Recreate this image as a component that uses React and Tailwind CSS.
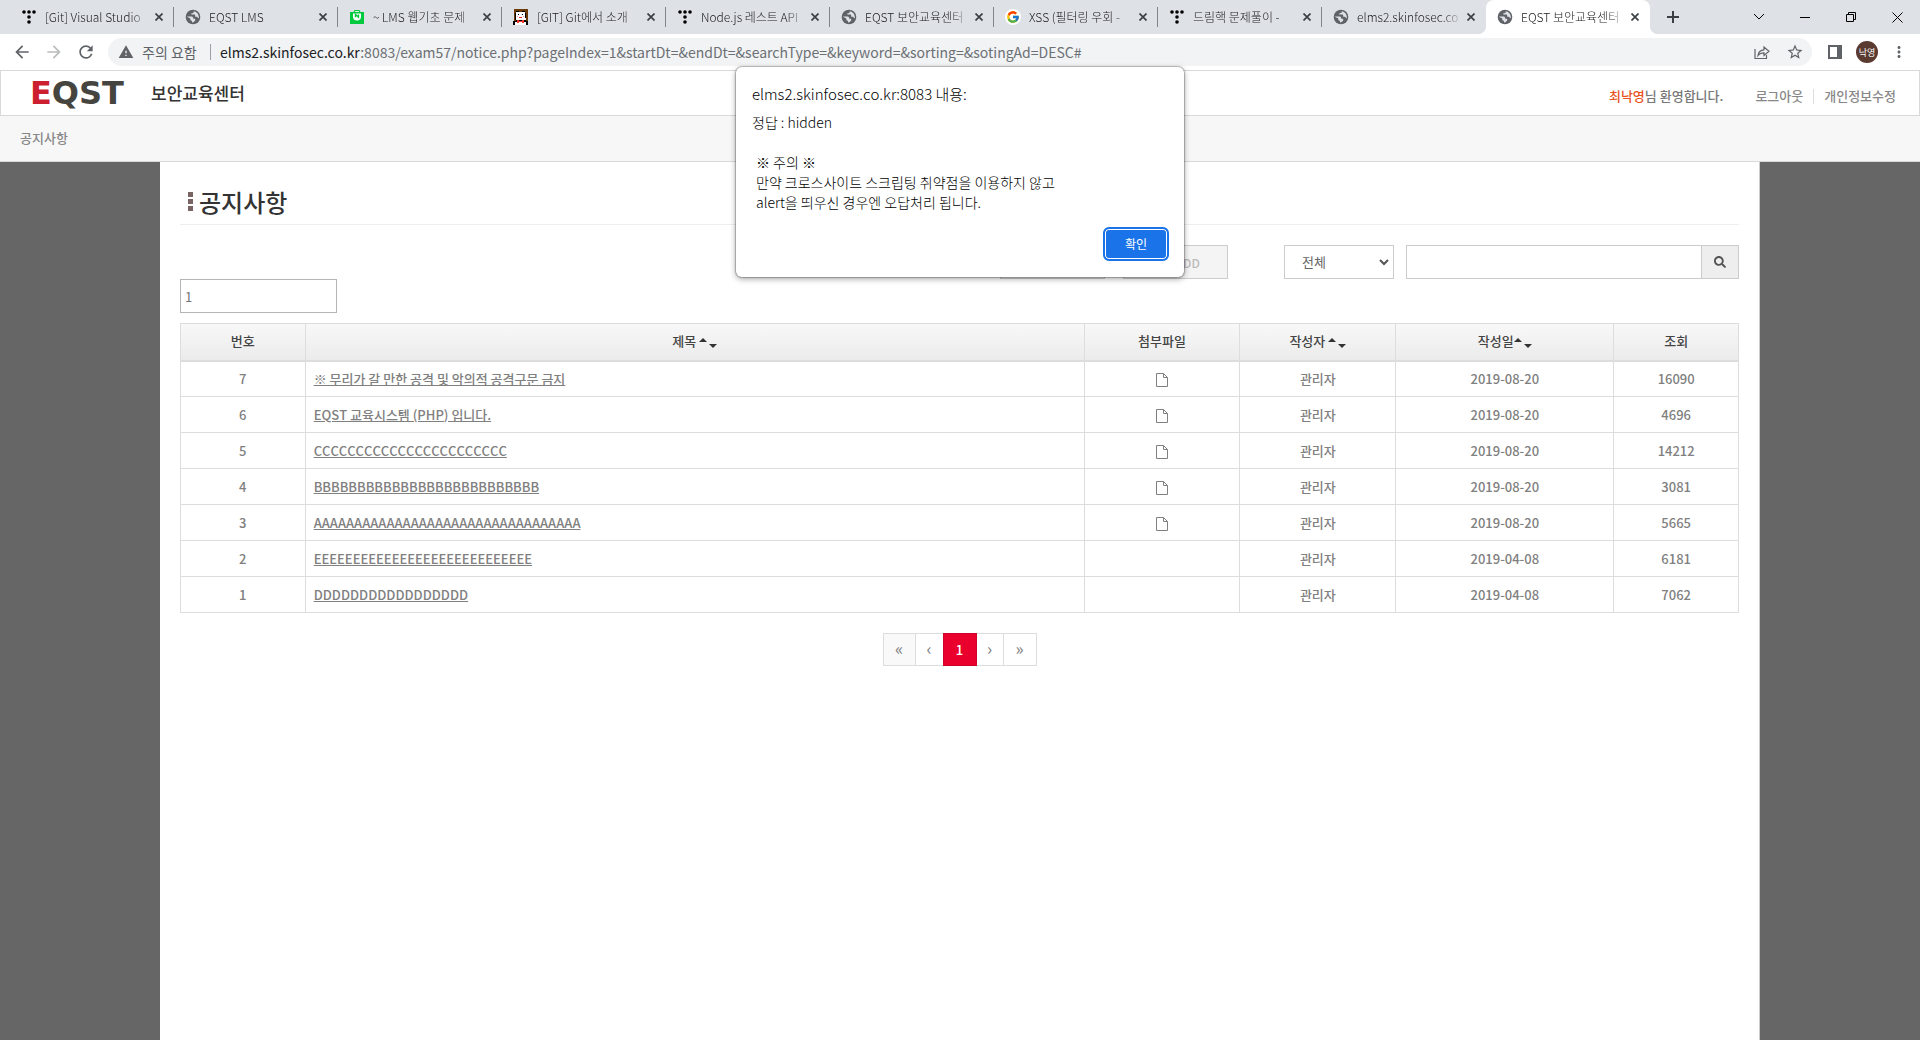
import React from "react";
import { MdWarning, MdStarBorder, MdRefresh, MdArrowBack, MdArrowForward, MdMoreVert } from "react-icons/md";
import { FcGoogle } from "react-icons/fc";
import { FaSearch } from "react-icons/fa";

function DotsIcon() {
  const dots = [[2, 3], [7, 3], [12, 3], [7, 8], [7, 13]];
  return (
    <svg viewBox="0 0 14 16" className="size-4 shrink-0" fill="#000" aria-hidden="true">
      {dots.map(([x, y]) => <circle key={x + "-" + y} cx={x} cy={y} r="1.8" />)}
    </svg>
  );
}

function CafeIcon() {
  return (
    <svg viewBox="0 0 16 16" className="size-4 shrink-0" aria-hidden="true">
      <path d="M1 3h3.500l1-2h5l1 2H15v12H1z" fill="#03c93f" />
      <path d="M5.800 3l.6-1h3.200l.6 1z" fill="#dff7e4" />
      <path d="M4 4.500h8v3a4 4 0 0 1-8 0z" fill="#fff" />
      <path d="M6.500 8.300V5.500l3 2.600V5.500" fill="none" stroke="#03c93f" strokeWidth="1.400" />
    </svg>
  );
}

function GirlIcon() {
  return (
    <svg viewBox="0 0 16 16" className="size-4 shrink-0" shapeRendering="crispEdges" aria-hidden="true">
      <path d="M1 0h14v16H1z" fill="#6b3a05" />
      <path d="M3 3h9v2h1v6H3z" fill="#fff" />
      <path d="M3 2h3v1H3zM9 2h3v1H9zM2 4h1v7H2zM12 4h1v5h-1zM5 5h1v1H5zM9 5h1v1H9z" fill="#000" />
      <path d="M6 8h3v1H6z" fill="#e22" />
      <path d="M4 7h1v1H4zM10 7h1v1h-1z" fill="#f6a0a0" />
      <path d="M0 12h3v-1h10v1h2v4H0z" fill="#000" />
      <path d="M2 13h11v3H2z" fill="#fff" />
      <path d="M4 11h2v1h3v-1h2v3H9v-1H6v1H4z" fill="#f03a2e" />
    </svg>
  );
}

function Globe() {
  return (
    <svg viewBox="0 0 16 16" className="size-4 shrink-0" aria-hidden="true">
      <circle cx="8" cy="8" r="7.300" fill="#5f6368" />
      <path d="M2 7.500h4.200c1.300 0 2 .7 2 1.700v.6h1.200c.8 0 .9.6.9 1.200-.1 1.200-1.500 2.200-3.300 2.600v-1.800c-1 0-1.700-.6-1.700-1.600v-.8L2 7.800z" fill="#dee1e6" />
      <path d="M8.700 2.200v.9c0 .8-.7 1.200-1.500 1.200H6.300v1.300h2.900c.7 0 1 .5 1 1.100v1h1.100c.9 0 1.300.4 1.600 1.200l.9.300c.4-3.300-1.600-6.400-5.100-7z" fill="#dee1e6" />
    </svg>
  );
}

function GoogleIcon() {
  return <span className="flex size-4 shrink-0 items-center justify-center rounded-full bg-white"><FcGoogle className="size-[14px]" /></span>;
}

const tabs = [
  { icon: DotsIcon, title: "[Git] Visual Studio" },
  { icon: Globe, title: "EQST LMS" },
  { icon: CafeIcon, title: "~ LMS 웹기초 문제" },
  { icon: GirlIcon, title: "[GIT] Git에서 소개" },
  { icon: DotsIcon, title: "Node.js 레스트 API" },
  { icon: Globe, title: "EQST 보안교육센터" },
  { icon: GoogleIcon, title: "XSS (필터링 우회 -" },
  { icon: DotsIcon, title: "드림핵 문제풀이 -" },
  { icon: Globe, title: "elms2.skinfosec.co" },
  { icon: Globe, title: "EQST 보안교육센터", active: true },
];

function Tab({ icon: Icon, title, active, divider }) {
  return (
    <div className={"relative flex h-[34px] w-[164px] min-w-0 shrink items-center pl-[11px] pr-[7px] " + (active ? "rounded-t-lg bg-white" : "")}>
      <Icon />
      <button type="button" className="ml-2 min-w-0 flex-1 overflow-hidden whitespace-nowrap text-left text-[12px] font-light leading-4 text-[#202124] [mask-image:linear-gradient(to_right,#000_80%,transparent)]">{title}</button>
      <button type="button" aria-label="탭 닫기" className="flex size-4 items-center justify-center text-[#3c4043]">
        <svg width="8" height="8" viewBox="0 0 8 8" stroke="currentColor" strokeWidth="1.700"><path d="M.5.5l7 7M7.500.5l-7 7" /></svg>
      </button>
      {divider && <span className="absolute right-0 top-[7px] h-5 w-px bg-[#80868b]" />}
      {active && (
        <>
          <span className="absolute -left-2 bottom-0 size-2 bg-[radial-gradient(circle_at_0_0,transparent_8px,#fff_8px)]" />
          <span className="absolute -right-2 bottom-0 size-2 bg-[radial-gradient(circle_at_100%_0,transparent_8px,#fff_8px)]" />
        </>
      )}
    </div>
  );
}

function BrowserChrome() {
  return (
    <div>
      <div className="flex h-[34px] items-center bg-[#dee1e6] pl-[10px]">
        {tabs.map((t, i) => <Tab key={i} {...t} divider={i < 8} />)}
        <button type="button" aria-label="새 탭" className="ml-[11px] flex size-6 items-center justify-center text-[#3c4043]">
          <svg width="12" height="12" viewBox="0 0 12 12" stroke="currentColor" strokeWidth="2"><path d="M6 0v12M0 6h12" /></svg>
        </button>
        <div className="ml-auto flex h-7 text-black">
          <button type="button" aria-label="탭 검색" className="flex w-[46px] items-center justify-center">
            <svg width="12" height="8" viewBox="0 0 12 8" fill="none" stroke="currentColor"><path d="M1 1l5 5 5-5" /></svg>
          </button>
          <button type="button" aria-label="최소화" className="flex w-[46px] items-center justify-center"><span className="h-px w-[10px] bg-black" /></button>
          <button type="button" aria-label="이전 크기로" className="flex w-[46px] items-center justify-center">
            <svg width="10" height="10" viewBox="0 0 10 10" fill="none" stroke="currentColor"><path d="M.5 2.500h7v7h-7zM2.500 2.500v-2h7v7h-2" /></svg>
          </button>
          <button type="button" aria-label="닫기" className="flex w-[46px] items-center justify-center">
            <svg width="11" height="11" viewBox="0 0 11 11" fill="none" stroke="currentColor"><path d="M.5.5l10 10M10.500.5l-10 10" /></svg>
          </button>
        </div>
      </div>
      <div className="flex h-9 items-center bg-white pl-3 pr-3 text-[#5f6368]">
        <button type="button" aria-label="뒤로"><MdArrowBack className="size-5" /></button>
        <button type="button" aria-label="앞으로" className="ml-3 text-[#babcbe]"><MdArrowForward className="size-5" /></button>
        <button type="button" aria-label="새로고침" className="ml-3"><MdRefresh className="size-5" /></button>
        <div className="ml-3 flex h-7 flex-1 items-center rounded-full bg-[#f1f3f4] pl-[10px] pr-2 text-[14px] leading-5">
          <MdWarning className="size-4" />
          <span className="ml-2 w-[60px] whitespace-nowrap">주의 요함</span>
          <span className="ml-2 h-4 w-px bg-[#9aa0a6]" />
          <span className="ml-[9px] flex-1 whitespace-nowrap text-[#6c7075]"><span className="text-[#202124]">elms2.skinfosec.co.kr</span>:8083/exam57/notice.php?pageIndex=1&amp;startDt=&amp;endDt=&amp;searchType=&amp;keyword=&amp;sorting=&amp;sotingAd=DESC#</span>
          <button type="button" aria-label="공유">
            <svg width="16" height="16" viewBox="0 0 16 16" fill="none" stroke="currentColor" strokeWidth="1.200"><path d="M1 5v9.500h11.500V11M4 11.500c.5-4 2.500-5.500 6-5.700V3l5 4.300-5 4.200V8.800c-3 0-4.500.7-6 2.700z" /></svg>
          </button>
          <button type="button" aria-label="북마크" className="ml-4"><MdStarBorder className="size-[18px]" /></button>
        </div>
        <button type="button" aria-label="측면 패널" className="ml-4">
          <svg width="14" height="14" viewBox="0 0 14 14"><path fill="currentColor" fillRule="evenodd" d="M0 0h14v14H0zM2 2v10h7V2z" /></svg>
        </button>
        <button type="button" aria-label="프로필" className="ml-[14px] flex size-[22px] items-center justify-center rounded-full bg-[#5b3a30] text-[9px] leading-none text-white">낙영</button>
        <button type="button" aria-label="메뉴" className="ml-3"><MdMoreVert className="size-[18px]" /></button>
      </div>
    </div>
  );
}

function SiteHeader() {
  return (
    <header className="[font-kerning:none]">
      <div className="flex h-[46px] items-center border border-[#d9d9d9] bg-white pl-[29px] pr-[23px]">
        <a href="#" className="flex items-center">
          <span className="w-[121px] font-['DejaVu_Sans',sans-serif] text-[32px] font-bold leading-8 text-[#45443f]"><span className="text-[#cc1f2f]">E</span>QST</span>
          <span className="text-[17px] font-medium leading-6 text-[#333]">보안교육센터</span>
        </a>
        <div className="ml-auto flex items-center pt-[6px] text-[13px] font-medium leading-5 text-[#888]">
          <span><span className="text-[#e8521e]">최낙영</span><span className="text-[#777]">님 환영합니다.</span></span>
          <a href="#" className="ml-8">로그아웃</a>
          <span className="mx-[10px] h-[15px] w-px bg-[#ddd]" />
          <a href="#">개인정보수정</a>
        </div>
      </div>
      <nav className="flex h-[46px] items-center border-b border-[#d9d9d9] bg-[#f7f7f7] pb-[2px] pl-5 text-[13px] font-medium leading-5 text-[#888]">공지사항</nav>
    </header>
  );
}

function Sort({ tight }) {
  return (
    <button type="button" aria-label="정렬" className={"inline-flex h-[10px] gap-[2px] align-middle " + (tight ? "" : "ml-[3px]")}>
      <svg width="8" height="4" viewBox="0 0 8 4" className="self-start"><path d="M0 4l4-4 4 4z" fill="#333" /></svg>
      <svg width="8" height="4" viewBox="0 0 8 4" className="self-end"><path d="M0 0l4 4 4-4z" fill="#333" /></svg>
    </button>
  );
}

function FileIcon() {
  return (
    <svg width="12" height="14" viewBox="0 0 12 14" className="inline align-middle" fill="none" stroke="#808080" role="img" aria-label="첨부파일">
      <path d="M.5.5h7l4 4v9H.5z" /><path d="M7.500.5v4h4" />
    </svg>
  );
}

const rows = [
  [7, "※ 무리가 갈 만한 공격 및 악의적 공격구문 금지", true, "2019-08-20", 16090],
  [6, "EQST 교육시스템 (PHP) 입니다.", true, "2019-08-20", 4696],
  [5, "CCCCCCCCCCCCCCCCCCCCCCC", true, "2019-08-20", 14212],
  [4, "BBBBBBBBBBBBBBBBBBBBBBBBBB", true, "2019-08-20", 3081],
  [3, "AAAAAAAAAAAAAAAAAAAAAAAAAAAAAAAAA", true, "2019-08-20", 5665],
  [2, "EEEEEEEEEEEEEEEEEEEEEEEEEEEE", false, "2019-04-08", 6181],
  [1, "DDDDDDDDDDDDDDDDD", false, "2019-04-08", 7062],
];

function NoticeTable() {
  const th = "border border-b-2 border-[#ddd] pb-px font-medium";
  const td = "border border-[#ddd]";
  return (
    <table className="mt-[10px] w-full table-fixed border-collapse text-center text-[13px] leading-5 text-[#808080]">
      <colgroup>
        <col className="w-[8%]" /><col className="w-[50%]" /><col className="w-[10%]" /><col className="w-[10%]" /><col className="w-[14%]" /><col className="w-[8%]" />
      </colgroup>
      <thead>
        <tr className="h-[37px] bg-linear-to-b from-[#f8f8f8] to-[#ebebeb] text-[#444]">
          <th className={th}>번호</th>
          <th className={th}>제목<Sort /></th>
          <th className={th}>첨부파일</th>
          <th className={th}>작성자<Sort /></th>
          <th className={th}>작성일<Sort tight /></th>
          <th className={th}>조회</th>
        </tr>
      </thead>
      <tbody className="font-medium">
        {rows.map(([no, title, file, date, hits]) => (
          <tr key={no} className="h-9">
            <td className={td}>{no}</td>
            <td className={td + " px-2 text-left"}><a href="#" className="underline">{title}</a></td>
            <td className={td}>{file && <FileIcon />}</td>
            <td className={td}>관리자</td>
            <td className={td}>{date}</td>
            <td className={td}>{hits}</td>
          </tr>
        ))}
      </tbody>
    </table>
  );
}

function Pagination() {
  const cell = "h-[33px] border border-[#ddd] pb-[3px] ";
  return (
    <nav aria-label="페이지" className="mt-5 flex justify-center text-[17px] leading-5 text-[#777]">
      <button type="button" className={cell + "w-[33px] bg-[#f9f9f9]"}>«</button>
      <button type="button" className={cell + "w-[27px] border-x-0"}>‹</button>
      <button type="button" className="h-[33px] w-[34px] border border-[#cf0029] bg-[#ea002c] text-[13px] font-medium text-white">1</button>
      <button type="button" className={cell + "w-[26px] border-x-0"}>›</button>
      <button type="button" className={cell + "w-[34px]"}>»</button>
    </nav>
  );
}

function NoticePage() {
  const date = "h-[34px] w-[105px] border border-[#ccc] bg-[#f4f4f4] pl-1 pr-1 text-[12px] font-medium placeholder:text-[#bbb]";
  return (
    <main className="flex flex-1 justify-center bg-[#666] [font-kerning:none]">
      <section className="w-full max-w-[1600px] border-r border-[#ccc] bg-white px-5">
        <h1 className="flex h-[63px] items-center gap-[6px] border-b border-[#eee] pl-2 pt-[17px] text-[24px] font-medium leading-9 text-[#333]">
          <span className="flex flex-col gap-[2px]">
            <span className="size-[5px] bg-[#776463]" /><span className="size-[5px] bg-[#776463]" /><span className="size-[5px] bg-[#776463]" />
          </span>
          공지사항
        </h1>
        <form className="mt-5 flex justify-end" onSubmit={(e) => e.preventDefault()}>
          <input disabled aria-label="시작일" placeholder="YYYY-MM-DD" className={date} />
          <input disabled aria-label="종료일" placeholder="YYYY-MM-DD" className={date + " ml-[18px]"} />
          <span className="relative ml-14 w-[110px]">
            <select aria-label="검색 구분" className="h-[34px] w-full appearance-none border border-[#ccc] bg-white pl-[17px] text-[13px] text-[#666]"><option>전체</option></select>
            <svg width="10" height="7" viewBox="0 0 10 7" className="pointer-events-none absolute right-[5px] top-[14px]" fill="none" stroke="#555" strokeWidth="2"><path d="M1 1l4 4 4-4" /></svg>
          </span>
          <input aria-label="검색어" className="ml-3 h-[34px] w-[295px] border border-r-0 border-[#ccc] px-3 text-[13px]" />
          <button type="submit" aria-label="검색" className="flex h-[34px] w-[38px] items-center justify-center border border-[#ccc] bg-[#eee] text-[#555]"><FaSearch className="size-3" /></button>
        </form>
        <input aria-label="페이지 번호" defaultValue="1" className="block h-[34px] w-[157px] border border-[#b5b5b5] px-1 text-[13px] text-[#777]" />
        <NoticeTable />
        <Pagination />
      </section>
    </main>
  );
}

function AlertDialog() {
  return (
    <div role="alertdialog" aria-labelledby="alert-title" aria-describedby="alert-text" className="absolute left-1/2 top-[67px] flex h-[210px] w-[448px] -translate-x-1/2 flex-col rounded-md bg-white pb-4 pl-4 pr-[15px] pt-[15px] text-[#202124] shadow-[0_0_1px_1px_rgba(0,0,0,0.25),0_2px_6px_rgba(0,0,0,0.35)] [font-kerning:none]">
      <h2 id="alert-title" className="text-[15px] font-light leading-6 text-black">elms2.skinfosec.co.kr:8083 내용:</h2>
      <div id="alert-text" className="mt-[6px] text-[14px] font-light leading-5 text-black">
        <p>정답 : hidden</p>
        <div className="mt-5 pl-1"><p>※ 주의 ※</p><p>만약 크로스사이트 스크립팅 취약점을 이용하지 않고</p><p>alert을 띄우신 경우엔 오답처리 됩니다.</p></div>
      </div>
      <button type="button" className="mt-auto h-[34px] w-[66px] self-end rounded-md border-2 border-[#1a73e8] bg-[#1a73e8] text-[12px] text-white shadow-[inset_0_0_0_1px_#fff]">확인</button>
    </div>
  );
}

export default function App() {
  return (
    <div className="relative flex min-h-screen flex-col overflow-hidden bg-white font-['Noto_Sans_CJK_KR',sans-serif]">
      <BrowserChrome />
      <SiteHeader />
      <NoticePage />
      <AlertDialog />
    </div>
  );
}
